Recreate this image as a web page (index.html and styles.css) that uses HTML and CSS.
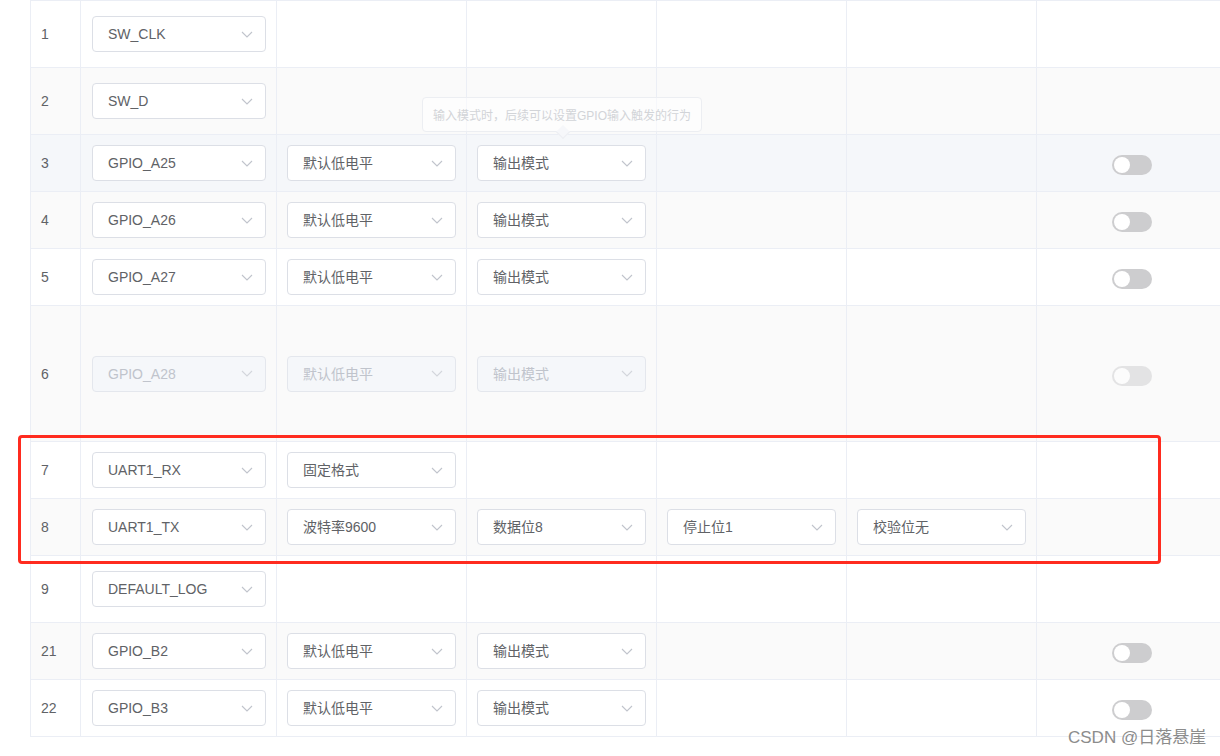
FILE: index.html
```html
<!DOCTYPE html>
<html lang="zh">
<head>
<meta charset="utf-8">
<title>GPIO 配置</title>
<link rel="stylesheet" href="styles.css">
</head>
<body>
<div class="page">
  <div class="table">
    <div class="row h67">
      <div class="cell c-num">1</div>
      <div class="cell c-pin"><div class="sel w174"><span>SW_CLK</span><svg class="arr" viewBox="0 0 12 7"><polyline points="1,1 6,6 11,1"/></svg></div></div>
      <div class="cell c-n"></div><div class="cell c-n"></div><div class="cell c-n"></div><div class="cell c-n"></div><div class="cell c-sw"></div>
    </div>
    <div class="row h67 stripe">
      <div class="cell c-num">2</div>
      <div class="cell c-pin"><div class="sel w174"><span>SW_D</span><svg class="arr" viewBox="0 0 12 7"><polyline points="1,1 6,6 11,1"/></svg></div></div>
      <div class="cell c-n"></div><div class="cell c-n"></div><div class="cell c-n"></div><div class="cell c-n"></div><div class="cell c-sw"></div>
    </div>
    <div class="row h57 hover">
      <div class="cell c-num">3</div>
      <div class="cell c-pin"><div class="sel w174"><span>GPIO_A25</span><svg class="arr" viewBox="0 0 12 7"><polyline points="1,1 6,6 11,1"/></svg></div></div>
      <div class="cell c-n"><div class="sel w169"><span>默认低电平</span><svg class="arr" viewBox="0 0 12 7"><polyline points="1,1 6,6 11,1"/></svg></div></div>
      <div class="cell c-n"><div class="sel w169"><span>输出模式</span><svg class="arr" viewBox="0 0 12 7"><polyline points="1,1 6,6 11,1"/></svg></div></div>
      <div class="cell c-n"></div><div class="cell c-n"></div>
      <div class="cell c-sw"><div class="switch"></div></div>
    </div>
    <div class="row h57 stripe">
      <div class="cell c-num">4</div>
      <div class="cell c-pin"><div class="sel w174"><span>GPIO_A26</span><svg class="arr" viewBox="0 0 12 7"><polyline points="1,1 6,6 11,1"/></svg></div></div>
      <div class="cell c-n"><div class="sel w169"><span>默认低电平</span><svg class="arr" viewBox="0 0 12 7"><polyline points="1,1 6,6 11,1"/></svg></div></div>
      <div class="cell c-n"><div class="sel w169"><span>输出模式</span><svg class="arr" viewBox="0 0 12 7"><polyline points="1,1 6,6 11,1"/></svg></div></div>
      <div class="cell c-n"></div><div class="cell c-n"></div>
      <div class="cell c-sw"><div class="switch"></div></div>
    </div>
    <div class="row h57">
      <div class="cell c-num">5</div>
      <div class="cell c-pin"><div class="sel w174"><span>GPIO_A27</span><svg class="arr" viewBox="0 0 12 7"><polyline points="1,1 6,6 11,1"/></svg></div></div>
      <div class="cell c-n"><div class="sel w169"><span>默认低电平</span><svg class="arr" viewBox="0 0 12 7"><polyline points="1,1 6,6 11,1"/></svg></div></div>
      <div class="cell c-n"><div class="sel w169"><span>输出模式</span><svg class="arr" viewBox="0 0 12 7"><polyline points="1,1 6,6 11,1"/></svg></div></div>
      <div class="cell c-n"></div><div class="cell c-n"></div>
      <div class="cell c-sw"><div class="switch"></div></div>
    </div>
    <div class="row h136 stripe">
      <div class="cell c-num">6</div>
      <div class="cell c-pin"><div class="sel w174 dis"><span>GPIO_A28</span><svg class="arr" viewBox="0 0 12 7"><polyline points="1,1 6,6 11,1"/></svg></div></div>
      <div class="cell c-n"><div class="sel w169 dis"><span>默认低电平</span><svg class="arr" viewBox="0 0 12 7"><polyline points="1,1 6,6 11,1"/></svg></div></div>
      <div class="cell c-n"><div class="sel w169 dis"><span>输出模式</span><svg class="arr" viewBox="0 0 12 7"><polyline points="1,1 6,6 11,1"/></svg></div></div>
      <div class="cell c-n"></div><div class="cell c-n"></div>
      <div class="cell c-sw"><div class="switch dis"></div></div>
    </div>
    <div class="row h57">
      <div class="cell c-num">7</div>
      <div class="cell c-pin"><div class="sel w174"><span>UART1_RX</span><svg class="arr" viewBox="0 0 12 7"><polyline points="1,1 6,6 11,1"/></svg></div></div>
      <div class="cell c-n"><div class="sel w169"><span>固定格式</span><svg class="arr" viewBox="0 0 12 7"><polyline points="1,1 6,6 11,1"/></svg></div></div>
      <div class="cell c-n"></div><div class="cell c-n"></div><div class="cell c-n"></div><div class="cell c-sw"></div>
    </div>
    <div class="row h57 stripe">
      <div class="cell c-num">8</div>
      <div class="cell c-pin"><div class="sel w174"><span>UART1_TX</span><svg class="arr" viewBox="0 0 12 7"><polyline points="1,1 6,6 11,1"/></svg></div></div>
      <div class="cell c-n"><div class="sel w169"><span>波特率9600</span><svg class="arr" viewBox="0 0 12 7"><polyline points="1,1 6,6 11,1"/></svg></div></div>
      <div class="cell c-n"><div class="sel w169"><span>数据位8</span><svg class="arr" viewBox="0 0 12 7"><polyline points="1,1 6,6 11,1"/></svg></div></div>
      <div class="cell c-n"><div class="sel w169"><span>停止位1</span><svg class="arr" viewBox="0 0 12 7"><polyline points="1,1 6,6 11,1"/></svg></div></div>
      <div class="cell c-n"><div class="sel w169"><span>校验位无</span><svg class="arr" viewBox="0 0 12 7"><polyline points="1,1 6,6 11,1"/></svg></div></div>
      <div class="cell c-sw"></div>
    </div>
    <div class="row h67">
      <div class="cell c-num">9</div>
      <div class="cell c-pin"><div class="sel w174"><span>DEFAULT_LOG</span><svg class="arr" viewBox="0 0 12 7"><polyline points="1,1 6,6 11,1"/></svg></div></div>
      <div class="cell c-n"></div><div class="cell c-n"></div><div class="cell c-n"></div><div class="cell c-n"></div><div class="cell c-sw"></div>
    </div>
    <div class="row h57 stripe">
      <div class="cell c-num">21</div>
      <div class="cell c-pin"><div class="sel w174"><span>GPIO_B2</span><svg class="arr" viewBox="0 0 12 7"><polyline points="1,1 6,6 11,1"/></svg></div></div>
      <div class="cell c-n"><div class="sel w169"><span>默认低电平</span><svg class="arr" viewBox="0 0 12 7"><polyline points="1,1 6,6 11,1"/></svg></div></div>
      <div class="cell c-n"><div class="sel w169"><span>输出模式</span><svg class="arr" viewBox="0 0 12 7"><polyline points="1,1 6,6 11,1"/></svg></div></div>
      <div class="cell c-n"></div><div class="cell c-n"></div>
      <div class="cell c-sw"><div class="switch"></div></div>
    </div>
    <div class="row h57">
      <div class="cell c-num">22</div>
      <div class="cell c-pin"><div class="sel w174"><span>GPIO_B3</span><svg class="arr" viewBox="0 0 12 7"><polyline points="1,1 6,6 11,1"/></svg></div></div>
      <div class="cell c-n"><div class="sel w169"><span>默认低电平</span><svg class="arr" viewBox="0 0 12 7"><polyline points="1,1 6,6 11,1"/></svg></div></div>
      <div class="cell c-n"><div class="sel w169"><span>输出模式</span><svg class="arr" viewBox="0 0 12 7"><polyline points="1,1 6,6 11,1"/></svg></div></div>
      <div class="cell c-n"></div><div class="cell c-n"></div>
      <div class="cell c-sw"><div class="switch"></div></div>
    </div>
  </div>

  <div class="tooltip">输入模式时，后续可以设置GPIO输入触发的行为<span class="tip-arrow"></span></div>
  <div class="highlight"></div>
  <div class="watermark">CSDN @日落悬崖</div>
</div>
</body>
</html>
```
FILE: styles.css
```css
* { box-sizing: border-box; }
html, body {
  margin: 0;
  padding: 0;
  background: #fff;
}
body {
  width: 1220px;
  height: 756px;
  overflow: hidden;
  font-family: "Liberation Sans", "Noto Sans CJK SC", sans-serif;
  font-size: 14px;
  color: #606266;
}
.page {
  position: relative;
  width: 1220px;
  height: 756px;
  overflow: hidden;
}
.table {
  margin-left: 30px;
  width: 1197px;
  border-left: 1px solid #ebeef5;
  border-top: 1px solid #ebeef5;
}
.row {
  display: flex;
  border-bottom: 1px solid #ebeef5;
  background: #fff;
}
.row.stripe { background: #fafafa; }
.row.hover { background: #f5f7fa; }
.h67 { height: 67px; }
.h57 { height: 57px; }
.h136 { height: 136px; }
.cell {
  display: flex;
  align-items: center;
  border-right: 1px solid #ebeef5;
  flex: none;
}
.c-num { width: 50px; padding-left: 10px; }
.c-pin { width: 196px; padding-left: 11px; }
.c-n { width: 190px; padding-left: 10px; }
.c-sw { width: 190px; justify-content: center; padding-left: 1px; }

.sel {
  height: 36px;
  border: 1px solid #dcdfe6;
  border-radius: 4px;
  background: #fff;
  display: flex;
  align-items: center;
  justify-content: space-between;
  padding: 0 12px 0 15px;
  color: #606266;
  line-height: 1;
}
.w174 { width: 174px; }
.w169 { width: 169px; }
.arr {
  width: 12px;
  height: 7px;
  fill: none;
  stroke: #c0c4cc;
  stroke-width: 1.1;
}
.sel.dis {
  background: #f5f7fa;
  border-color: #e4e7ed;
  color: #c0c4cc;
}
.sel.dis .arr { stroke: #d3d6dc; }

.switch {
  position: relative;
  width: 40px;
  height: 20px;
  margin-top: 4px;
  border-radius: 10px;
  background: #cdcdcf;
}
.switch::after {
  content: "";
  position: absolute;
  left: 2px;
  top: 2px;
  width: 16px;
  height: 16px;
  border-radius: 50%;
  background: #fff;
}
.switch.dis { opacity: 0.5; }

.tooltip {
  position: absolute;
  left: 422px;
  top: 97px;
  width: 280px;
  height: 35px;
  padding: 0 10px;
  display: flex;
  align-items: center;
  font-size: 12px;
  color: #d2d4d8;
  background: rgba(255, 255, 255, 0.55);
  border: 1px solid #eceef2;
  border-radius: 4px;
  white-space: nowrap;
}
.tip-arrow {
  position: absolute;
  left: 135px;
  bottom: -6px;
  width: 10px;
  height: 10px;
  background: #f6f7fa;
  border-right: 1px solid #eceef2;
  border-bottom: 1px solid #eceef2;
  transform: rotate(45deg);
}
.highlight {
  position: absolute;
  left: 18px;
  top: 435px;
  width: 1143px;
  height: 129px;
  border: 3px solid #ff2b1f;
  border-radius: 4px;
}
.watermark {
  position: absolute;
  left: 1068px;
  top: 727px;
  font-size: 17px;
  line-height: 22px;
  color: #8c8c8c;
  white-space: nowrap;
}
```
